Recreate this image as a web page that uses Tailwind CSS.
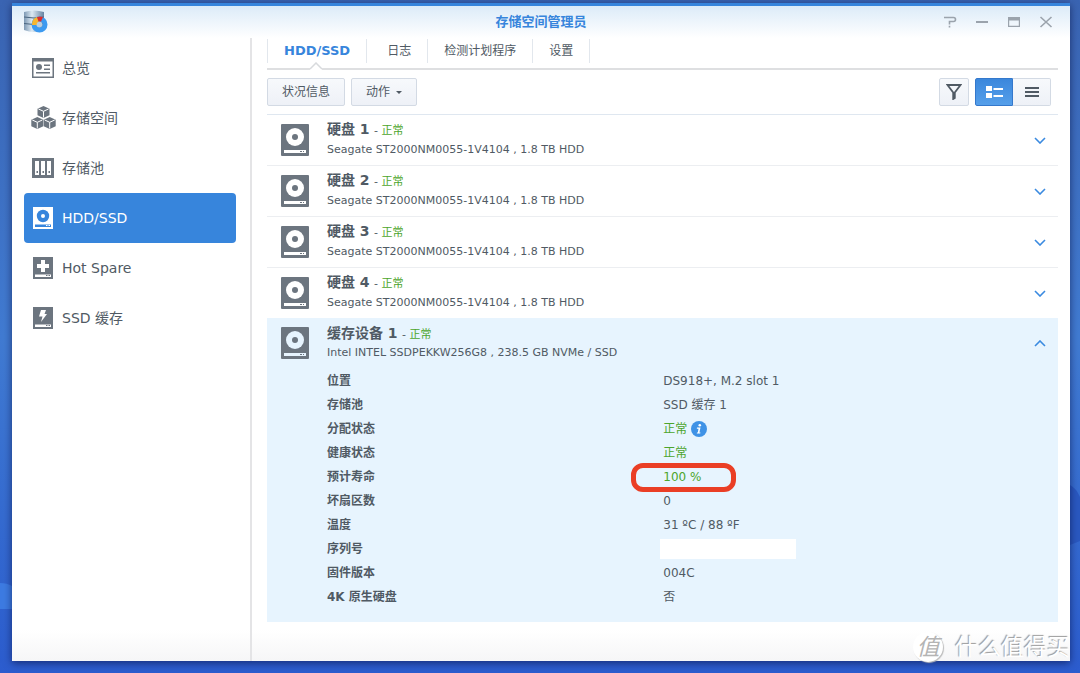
<!DOCTYPE html>
<html lang="zh-CN">
<head>
<meta charset="utf-8">
<meta name="viewport" content="width=device-width, initial-scale=1">
<title>存储空间管理员</title>
<script src="https://cdn.jsdelivr.net/npm/@tailwindcss/browser@4"></script>
</head>
<body class="relative flex h-screen min-h-[640px] overflow-hidden bg-linear-to-b from-[#3a64b2] via-[#417bd2] to-[#2c5cce] pt-[3px] pr-[10px] pb-3 pl-3 font-['DejaVu_Sans','Noto_Sans_CJK_SC',sans-serif] text-xs text-[#505a64]">

<svg class="hidden" aria-hidden="true">
  <symbol id="disk" viewBox="0 0 28 32">
    <rect width="28" height="32" rx="1" fill="#6c757f"/>
    <circle cx="14" cy="13" r="9" fill="var(--face,#fff)"/>
    <circle cx="14" cy="13" r="3" fill="#6c757f"/>
    <path fill="var(--face,#fff)" d="M3 26h22v3H3z"/>
    <path fill="#6c757f" d="M19 27h2v1h-2zM22 27h1v1h-1z"/>
  </symbol>
  <symbol id="down" viewBox="0 0 12 7"><path d="M1 1l5 5 5-5" fill="none" stroke="#3a8ae0" stroke-width="1.6"/></symbol>
</svg>

<!-- desktop wallpaper waves -->
<svg class="absolute top-[583px] left-0 h-[26px] w-3" viewBox="0 0 12 26" aria-hidden="true"><path d="M0 0q7 0 12 3v23H0z" fill="#3d7be2"/></svg>
<svg class="absolute top-[485px] right-0 h-[60px] w-[10px]" viewBox="0 0 10 60" aria-hidden="true"><path d="M0 0q6 3 10 12v44L0 60z" fill="#2a58c0"/></svg>

<div class="relative flex min-w-0 flex-1 flex-col border-t-[3px] border-[#3785dc] bg-white shadow-[0_2px_8px_rgba(0,0,40,0.55)]">
  <header class="flex h-8 shrink-0 items-center bg-linear-to-b from-[#dcebf8] to-white px-3">
    <div class="flex flex-1 pr-1">
      <svg class="size-6" viewBox="0 0 24 24" aria-hidden="true">
        <defs><linearGradient id="metal"><stop offset="0" stop-color="#7d98b3"/><stop offset=".4" stop-color="#dce9f3"/><stop offset="1" stop-color="#6583a2"/></linearGradient></defs>
        <path d="M0 2q10-3 20 0v18q-10 4-20 0z" fill="url(#metal)"/>
        <path d="M0 7q10 2 20 0M0 13.500q10 2 20 0" fill="none" stroke="#49647f"/>
        <circle cx="15.500" cy="14.500" r="5.500" fill="none" stroke="#3c9af0" stroke-width="5"/>
        <path d="M8 15a8 8 0 0 1 5-8l2 5a3 3 0 0 0-2 3z" fill="#f8b62e"/>
        <path d="M13 7a9 9 0 0 1 6 0l-2 4.500h-2.500z" fill="#dd2c2c"/>
        <circle cx="15.500" cy="14.500" r="2.800" fill="#b9cddd"/>
      </svg>
    </div>
    <h1 class="text-[13px] font-bold text-[#3785dc]">存储空间管理员</h1>
    <div class="flex flex-1 items-center justify-end gap-4 pr-1 text-[#9ba3ac]">
      <button aria-label="帮助"><svg class="size-4" viewBox="0 0 16 16" fill="none" stroke="currentColor" stroke-width="1.600"><path d="M2 3.500h9.500q2 0 2 2t-2 2H7.500v3M7.500 11.800v1.700"/></svg></button>
      <button aria-label="最小化"><svg class="size-4" viewBox="0 0 16 16"><path d="M2 7h12v2H2z" fill="currentColor"/></svg></button>
      <button aria-label="最大化"><svg class="size-4" viewBox="0 0 16 16" fill="currentColor"><path fill-rule="evenodd" d="M2 3h12v10H2zm1.200 3.500v5.300h9.600V6.500z"/></svg></button>
      <button aria-label="关闭"><svg class="size-4" viewBox="0 0 16 16" fill="none" stroke="currentColor" stroke-width="1.600"><path d="M2.500 3l11 10M13.500 3l-11 10"/></svg></button>
    </div>
  </header>

  <div class="flex min-h-0 flex-1 bg-linear-to-b from-white from-95% to-[#f6f6f7]">
    <nav class="w-60 shrink-0 border-r-2 border-[#e4e4e6] pt-[5px] pr-[14px] pl-3 text-sm" aria-label="主菜单">
      <a href="#" class="flex h-[50px] items-center gap-2 rounded-sm px-2">
        <svg class="size-[22px]" viewBox="0 0 22 22" fill="#6c757f"><path fill-rule="evenodd" d="M0 1h22v20H0zm1.500 3.500v15h19v-15z"/><circle cx="7" cy="10" r="3"/><path d="M12 7.500h6V9h-6zM12 11.500h6V13h-6zM4 15h14v1.500H4z"/></svg>
        总览</a>
      <a href="#" class="flex h-[50px] items-center gap-2 rounded-sm px-2">
        <svg class="h-6 w-[22px] overflow-visible" viewBox="0 0 22 24"><defs><g id="cube"><path d="M6 0l6 2.800v6.400L6 12 0 9.200V2.800z" fill="#6c757f"/><path d="M1 3l5 2.300L11 3M6 5.300V11.500" fill="none" stroke="#fff"/></g></defs><use href="#cube" x="5.500"/><use href="#cube" x="-.7" y="11"/><use href="#cube" x="11.700" y="11"/></svg>
        存储空间</a>
      <a href="#" class="flex h-[50px] items-center gap-2 rounded-sm px-2">
        <svg class="size-[22px]" viewBox="0 0 22 22"><path fill="#6c757f" d="M0 1h22v20H0z"/><path fill="#fff" d="M3 4h4v14H3zM9 4h4v14H9zM15 4h4v14h-4z"/><path fill="#6c757f" d="M4.500 14h1.500v2H4.500zM10.500 14H12v2h-1.500zM16.500 14H18v2h-1.500z"/></svg>
        存储池</a>
      <a href="#" aria-current="page" class="flex h-[50px] items-center gap-2 rounded-sm bg-[#3785dc] px-2 text-white">
        <svg class="size-[22px]" viewBox="0 0 22 22"><path fill="#fff" d="M1 0h20v22H1z"/><circle cx="11" cy="9" r="6.200" fill="#3785dc"/><circle cx="11" cy="9" r="2" fill="#fff"/><path fill="#3785dc" d="M3 17.500h16v2.500H3z"/><path fill="#fff" d="M14 18h1.500v1H14zM16.500 18H18v1h-1.500z"/></svg>
        HDD/SSD</a>
      <a href="#" class="flex h-[50px] items-center gap-2 rounded-sm px-2">
        <svg class="size-[22px]" viewBox="0 0 22 22"><path fill="#6c757f" d="M1 0h20v22H1z"/><path fill="#fff" d="M9 3h4v4h4v4h-4v4H9v-4H5V7h4zM3 17.500h16v2.500H3z"/><path fill="#6c757f" d="M14 18h1.500v1H14zM16.500 18H18v1h-1.500z"/></svg>
        Hot Spare</a>
      <a href="#" class="flex h-[50px] items-center gap-2 rounded-sm px-2">
        <svg class="size-[22px]" viewBox="0 0 22 22"><path fill="#6c757f" d="M1 0h20v22H1z"/><path fill="#fff" d="M9 3h5l-1.500 4H15L9 15l1.500-5.500H7zM3 17.500h16v2.500H3z"/><path fill="#6c757f" d="M14 18h1.500v1H14zM16.500 18H18v1h-1.500z"/></svg>
        SSD 缓存</a>
    </nav>

    <main class="min-w-0 flex-1 pr-3 pl-[15px]">
      <div class="relative flex h-8 border-b-2 border-[#dedfe1]" role="tablist">
        <button role="tab" aria-selected="true" class="mt-px h-6 border-x border-[#e2e7ed] px-4 text-[13px] font-bold text-[#3785dc]">HDD/SSD</button>
        <button role="tab" aria-selected="false" class="mt-px h-6 border-r border-[#e2e7ed] pr-4 pl-5">日志</button>
        <button role="tab" aria-selected="false" class="mt-px h-6 border-r border-[#e2e7ed] px-4">检测计划程序</button>
        <button role="tab" aria-selected="false" class="mt-px h-6 border-r border-[#e2e7ed] px-4">设置</button>
        <svg class="absolute top-6 left-[43px] h-2 w-3" viewBox="0 0 12 8" aria-hidden="true"><path d="M0 7l6-6 6 6v1H0z" fill="#fff"/><path d="M0 7l6-6 6 6" fill="none" stroke="#d8dadd" stroke-width="1.500"/></svg>
      </div>

      <div class="flex h-[45px] items-center gap-[6px] border-b border-[#dfe7f0]">
        <button class="h-7 rounded-xs border border-[#d3dae4] bg-linear-to-b from-[#f7f9fc] to-[#eef1f7] px-[14px]">状况信息</button>
        <button class="flex h-7 items-center gap-[6px] rounded-xs border border-[#d3dae4] bg-linear-to-b from-[#f7f9fc] to-[#eef1f7] px-[14px]">动作
          <svg class="h-[3px] w-[6px]" viewBox="0 0 6 3"><path d="M0 0h6L3 3z" fill="#505a64"/></svg></button>
        <button aria-label="筛选" class="ml-auto flex h-7 w-[30px] items-center justify-center rounded-xs border border-[#d3dae4] bg-linear-to-b from-[#f7f9fc] to-[#eef1f7]">
          <svg class="size-4" viewBox="0 0 16 16" fill="none" stroke="#505a64" stroke-width="1.800"><path d="M1.500 1h13L8.800 8.500V14L7.200 15V8.500z"/></svg></button>
        <div class="mr-[7px] flex">
          <button aria-label="详细视图" aria-pressed="true" class="flex h-7 w-[38px] items-center justify-center rounded-l-xs border border-[#3478cc] bg-linear-to-b from-[#3b87dc] to-[#559fea]">
            <svg class="h-[13px] w-[17px]" viewBox="0 0 17 13" fill="#fff"><path d="M0 0h6v5H0zM0 7h6v5H0zM7.500 2H17v2H7.500zM7.500 9H17v2H7.500z"/></svg></button>
          <button aria-label="列表视图" aria-pressed="false" class="flex h-7 w-[38px] items-center justify-center rounded-r-xs border border-l-0 border-[#d3dae4] bg-linear-to-b from-[#f7f9fc] to-[#eef1f7]">
            <svg class="h-[10px] w-[14px]" viewBox="0 0 14 10" fill="#505a64"><path d="M0 0h14v2H0zM0 4h14v2H0zM0 8h14v2H0z"/></svg></button>
        </div>
      </div>

      <section class="flex h-[51px] items-center gap-[18px] border-b border-[#eceef1] pr-3 pl-[14px]">
        <svg class="h-8 w-7"><use href="#disk"/></svg>
        <div class="flex-1"><h2 class="h-5 text-sm leading-[18px]"><b>硬盘 1</b> <span class="text-[11px]">- <span class="text-[#4da52c]">正常</span></span></h2><p class="text-[11px] leading-5">Seagate ST2000NM0055-1V4104 , 1.8 TB HDD</p></div>
        <button aria-label="展开 硬盘 1"><svg class="h-[7px] w-3"><use href="#down"/></svg></button>
      </section>
      <section class="flex h-[51px] items-center gap-[18px] border-b border-[#eceef1] pr-3 pl-[14px]">
        <svg class="h-8 w-7"><use href="#disk"/></svg>
        <div class="flex-1"><h2 class="h-5 text-sm leading-[18px]"><b>硬盘 2</b> <span class="text-[11px]">- <span class="text-[#4da52c]">正常</span></span></h2><p class="text-[11px] leading-5">Seagate ST2000NM0055-1V4104 , 1.8 TB HDD</p></div>
        <button aria-label="展开 硬盘 2"><svg class="h-[7px] w-3"><use href="#down"/></svg></button>
      </section>
      <section class="flex h-[51px] items-center gap-[18px] border-b border-[#eceef1] pr-3 pl-[14px]">
        <svg class="h-8 w-7"><use href="#disk"/></svg>
        <div class="flex-1"><h2 class="h-5 text-sm leading-[18px]"><b>硬盘 3</b> <span class="text-[11px]">- <span class="text-[#4da52c]">正常</span></span></h2><p class="text-[11px] leading-5">Seagate ST2000NM0055-1V4104 , 1.8 TB HDD</p></div>
        <button aria-label="展开 硬盘 3"><svg class="h-[7px] w-3"><use href="#down"/></svg></button>
      </section>
      <section class="flex h-[50px] items-center gap-[18px] pr-3 pl-[14px]">
        <svg class="h-8 w-7"><use href="#disk"/></svg>
        <div class="flex-1"><h2 class="h-5 text-sm leading-[18px]"><b>硬盘 4</b> <span class="text-[11px]">- <span class="text-[#4da52c]">正常</span></span></h2><p class="text-[11px] leading-5">Seagate ST2000NM0055-1V4104 , 1.8 TB HDD</p></div>
        <button aria-label="展开 硬盘 4"><svg class="h-[7px] w-3"><use href="#down"/></svg></button>
      </section>

      <section class="bg-[#e7f4fe] pb-[13px]">
        <div class="flex h-[50px] items-center gap-[18px] pr-3 pl-[14px]">
          <svg class="h-8 w-7 [--face:#e7f4fe]"><use href="#disk"/></svg>
          <div class="flex-1"><h2 class="h-5 text-sm leading-5"><b>缓存设备 1</b> <span class="text-[11px]">- <span class="text-[#4da52c]">正常</span></span></h2><p class="text-[11px] leading-5">Intel INTEL SSDPEKKW256G8 , 238.5 GB NVMe / SSD</p></div>
          <button aria-label="收起 缓存设备 1"><svg class="h-[7px] w-3 rotate-180"><use href="#down"/></svg></button>
        </div>
        <div class="pt-px pl-[60px]">
          <table class="w-full table-fixed text-left leading-6 [&_td]:h-6 [&_td]:p-0 [&_th]:h-6 [&_th]:w-[46%] [&_th]:p-0">
            <tr><th scope="row">位置</th><td>DS918+, M.2 slot 1</td></tr>
            <tr><th scope="row">存储池</th><td>SSD 缓存 1</td></tr>
            <tr><th scope="row">分配状态</th><td><div class="flex h-6 items-center gap-1 text-[#4da52c]">正常
              <svg class="size-4" viewBox="0 0 16 16" aria-label="信息"><circle cx="8" cy="8" r="8" fill="#3f92e6"/><circle cx="8.800" cy="4.200" r="1.300" fill="#fff"/><path d="M6 6.500h3.500L8.400 11.500H9.500L9.200 12.600H5.800L6 11.500h.8L7.500 7.700H5.800z" fill="#fff"/></svg></div></td></tr>
            <tr><th scope="row">健康状态</th><td class="text-[#4da52c]">正常</td></tr>
            <tr><th scope="row">预计寿命</th><td class="relative text-[#4da52c]">100 %<span class="absolute -top-[2px] -left-8 h-[29px] w-[105px] rounded-xl border-5 border-[#ea3e25]"></span></td></tr>
            <tr><th scope="row">坏扇区数</th><td>0</td></tr>
            <tr><th scope="row">温度</th><td>31 ºC / 88 ºF</td></tr>
            <tr><th scope="row">序列号</th><td class="relative"><span class="absolute top-[2px] -left-[3px] h-5 w-[136px] bg-white"></span></td></tr>
            <tr><th scope="row">固件版本</th><td>004C</td></tr>
            <tr><th scope="row">4K 原生硬盘</th><td>否</td></tr>
          </table>
        </div>
      </section>
    </main>
  </div>

  <div class="absolute right-0 -bottom-px flex items-center gap-3 text-[23px] leading-[30px] whitespace-nowrap text-white">
    <span class="flex size-[30px] items-center justify-center rounded-full bg-white text-[#b4b4b4] italic shadow-[1px_1px_1px_#bbb]">值</span>
    <span class="[text-shadow:-1px_-1px_1px_#999]">什么值得买</span>
  </div>
</div>
</body>
</html>
